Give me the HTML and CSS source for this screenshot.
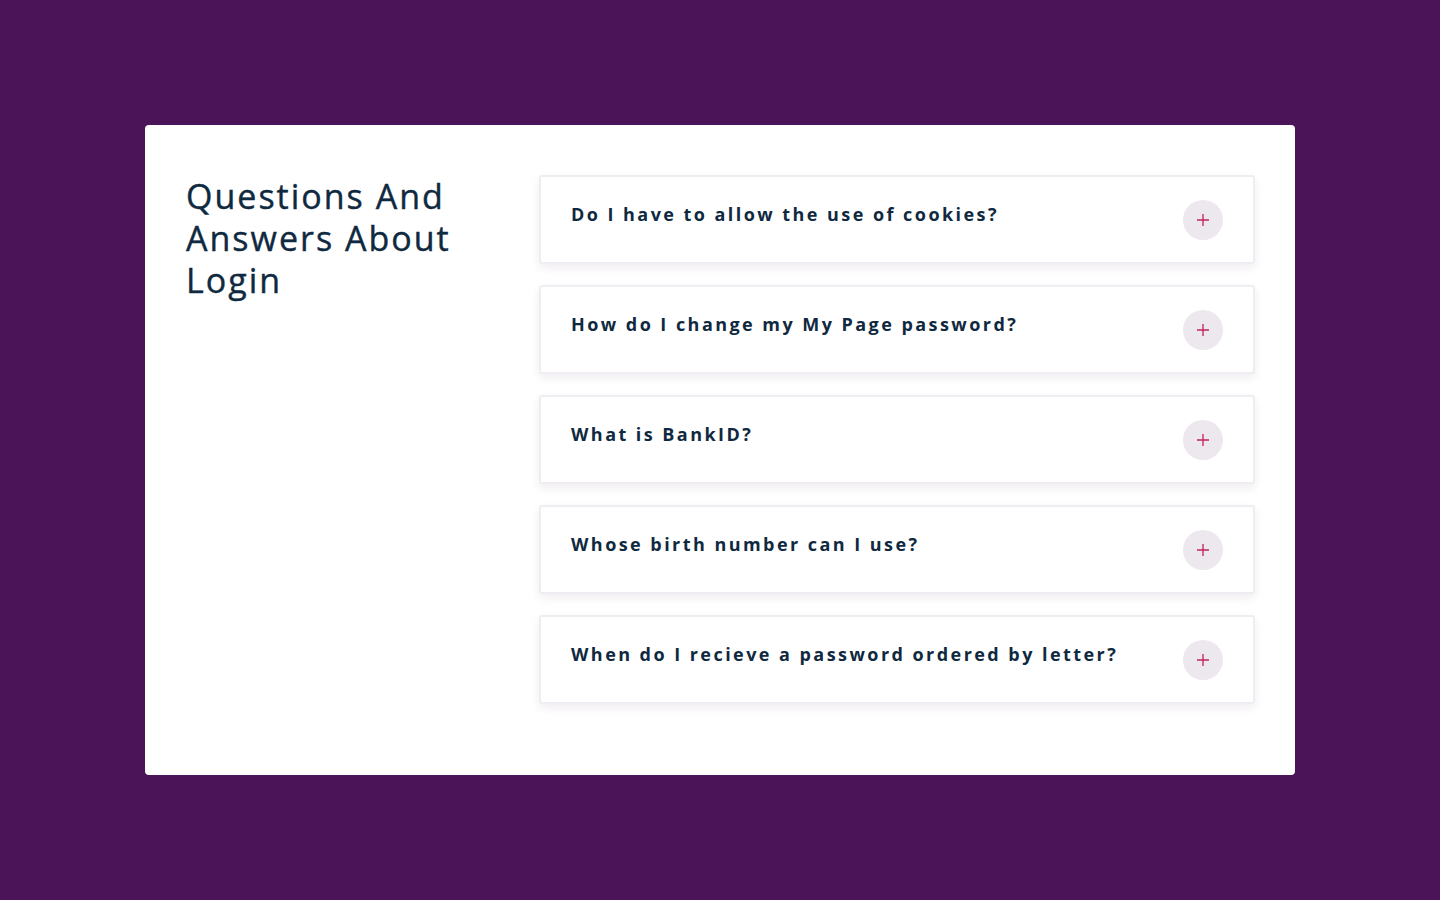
FILE: index.html
```html
<!DOCTYPE html>
<html lang="en">
<head>
<meta charset="utf-8">
<title>FAQ</title>
<link rel="stylesheet" href="styles.css">
</head>
<body>
<main class="page">
  <section class="card">
    <div class="intro">
      <h1 class="title">Questions And Answers About Login</h1>
    </div>
    <div class="faq">
      <div class="item"><p class="q">Do I have to allow the use of cookies?</p><span class="toggle"><svg width="14" height="14" viewBox="0 0 14 14"><path d="M7 1v12M1 7h12" stroke="#c0245f" stroke-width="1.3"/></svg></span></div>
      <div class="item"><p class="q">How do I change my My Page password?</p><span class="toggle"><svg width="14" height="14" viewBox="0 0 14 14"><path d="M7 1v12M1 7h12" stroke="#c0245f" stroke-width="1.3"/></svg></span></div>
      <div class="item"><p class="q">What is BankID?</p><span class="toggle"><svg width="14" height="14" viewBox="0 0 14 14"><path d="M7 1v12M1 7h12" stroke="#c0245f" stroke-width="1.3"/></svg></span></div>
      <div class="item"><p class="q">Whose birth number can I use?</p><span class="toggle"><svg width="14" height="14" viewBox="0 0 14 14"><path d="M7 1v12M1 7h12" stroke="#c0245f" stroke-width="1.3"/></svg></span></div>
      <div class="item"><p class="q">When do I recieve a password ordered by letter?</p><span class="toggle"><svg width="14" height="14" viewBox="0 0 14 14"><path d="M7 1v12M1 7h12" stroke="#c0245f" stroke-width="1.3"/></svg></span></div>
    </div>
  </section>
</main>
</body>
</html>
```

FILE: styles.css
```css
* { box-sizing: border-box; }
html, body { margin: 0; padding: 0; }
body {
  background: #4b1458;
  font-family: "Open Sans", "Noto Sans", sans-serif;
  color: #0f2940;
  width: 1440px;
  height: 900px;
}
.page {
  padding-top: 125px;
  display: flex;
  justify-content: center;
}
.card {
  width: 1150px;
  height: 650px;
  background: #ffffff;
  border-radius: 4px;
  display: flex;
  padding: 50px 40px 0 41px;
}
.intro {
  width: 353px;
  flex: none;
}
.title {
  margin: 0;
  font-size: 34px;
  font-weight: 500;
  -webkit-text-stroke: 0.4px #0f2940;
  line-height: 42px;
  letter-spacing: 2px;
  width: 300px;
  color: #0f2940;
}
.faq {
  flex: 1;
  display: flex;
  flex-direction: column;
  gap: 21px;
}
.item {
  height: 89px;
  border: 2px solid #efedf1;
  border-radius: 3px;
  background: #fff;
  box-shadow: 0 4px 10px rgba(60, 30, 70, 0.08);
  display: flex;
  justify-content: space-between;
  align-items: center;
  padding: 0 30px 0 30px;
}
.q {
  margin: 0;
  align-self: flex-start;
  padding-top: 25px;
  font-size: 18px;
  font-weight: 700;
  letter-spacing: 2.45px;
  line-height: 24px;
  color: #0f2940;
}
.toggle {
  width: 40px;
  height: 40px;
  border-radius: 50%;
  background: #ece8ee;
  display: flex;
  align-items: center;
  justify-content: center;
  flex: none;
}
```
